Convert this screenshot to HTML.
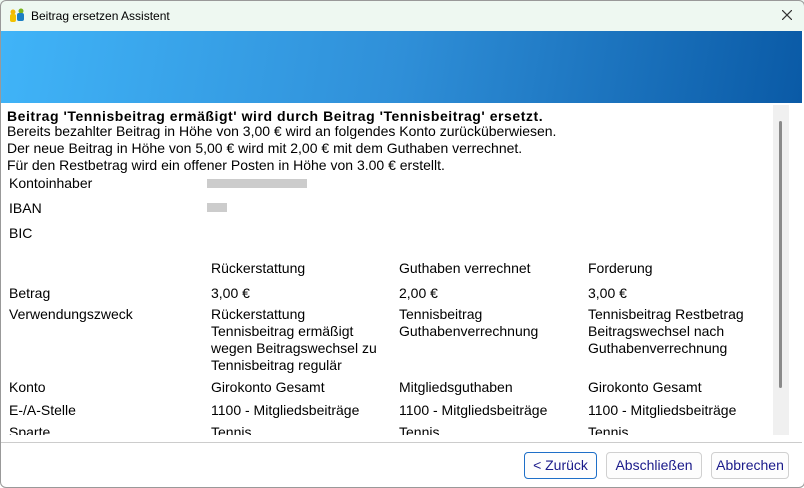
<!DOCTYPE html><html><head><style>
body{margin:0;width:804px;height:487px;overflow:hidden;font-family:"Liberation Sans",sans-serif;font-size:14px;color:#000;background:#fff;position:relative}
.a{position:absolute;white-space:nowrap;line-height:17px}
.tb{position:absolute;left:0;top:0;width:804px;height:31px;background:#eef8f1}
.bn{position:absolute;left:0;top:31px;width:802px;height:72px;background:linear-gradient(100deg,#40b4f8,#2f8fd8 50%,#0a5aa6)}
.btn{position:absolute;top:452px;height:25px;border:1px solid #d0d0d0;border-radius:4px;background:#fdfdfd;color:#1a1a8a;font-size:14px;line-height:25px;text-align:center}
.blur{position:absolute;background:#ccc;height:9px}
</style></head><body>
<div class="tb"></div>
<svg style="position:absolute;left:9px;top:8px" width="16" height="15"><circle cx="4" cy="4" r="2.5" fill="#f2b705"/><rect x="1" y="6" width="6" height="8" rx="2" fill="#f2c200"/><circle cx="12" cy="3" r="2.5" fill="#7ab51d"/><rect x="8" y="5" width="7" height="8" rx="2" fill="#1b7fc4"/></svg>
<div class="a" style="left:31px;top:8px;font-size:12px">Beitrag ersetzen Assistent</div>
<svg style="position:absolute;left:782px;top:10px" width="10" height="10"><path d="M0 0L10 10M10 0L0 10" stroke="#333" stroke-width="1.2"/></svg>
<div class="bn"></div>
<div style="position:absolute;left:0;top:0;width:803px;height:486px;border:1px solid #999;border-radius:6px;pointer-events:none"></div>
<div class="a" style="left:7px;top:108px;font-weight:bold;letter-spacing:0.55px">Beitrag 'Tennisbeitrag ermäßigt' wird durch Beitrag 'Tennisbeitrag' ersetzt.</div>
<div class="a" style="left:7px;top:123px">Bereits bezahlter Beitrag in Höhe von 3,00 € wird an folgendes Konto zurücküberwiesen.<br>Der neue Beitrag in Höhe von 5,00 € wird mit 2,00 € mit dem Guthaben verrechnet.<br>Für den Restbetrag wird ein offener Posten in Höhe von 3.00 € erstellt.</div>
<div class="a" style="left:9px;top:175px">Kontoinhaber</div>
<div class="blur" style="left:207px;top:179px;width:100px"></div>
<div class="a" style="left:9px;top:200px">IBAN</div>
<div class="blur" style="left:207px;top:203px;width:20px"></div>
<div class="a" style="left:9px;top:225px">BIC</div>
<div class="a" style="left:211px;top:260px">Rückerstattung</div><div class="a" style="left:399px;top:260px">Guthaben verrechnet</div><div class="a" style="left:588px;top:260px">Forderung</div>
<div class="a" style="left:9px;top:285px">Betrag</div><div class="a" style="left:211px;top:285px">3,00 €</div><div class="a" style="left:399px;top:285px">2,00 €</div><div class="a" style="left:588px;top:285px">3,00 €</div>
<div class="a" style="left:9px;top:306px">Verwendungszweck</div>
<div class="a" style="left:211px;top:306px">Rückerstattung<br>Tennisbeitrag ermäßigt<br>wegen Beitragswechsel zu<br>Tennisbeitrag regulär</div>
<div class="a" style="left:399px;top:306px">Tennisbeitrag<br>Guthabenverrechnung</div>
<div class="a" style="left:588px;top:306px">Tennisbeitrag Restbetrag<br>Beitragswechsel nach<br>Guthabenverrechnung</div>
<div class="a" style="left:9px;top:379px">Konto</div><div class="a" style="left:211px;top:379px">Girokonto Gesamt</div><div class="a" style="left:399px;top:379px">Mitgliedsguthaben</div><div class="a" style="left:588px;top:379px">Girokonto Gesamt</div>
<div class="a" style="left:9px;top:402px">E-/A-Stelle</div><div class="a" style="left:211px;top:402px">1100 - Mitgliedsbeiträge</div><div class="a" style="left:399px;top:402px">1100 - Mitgliedsbeiträge</div><div class="a" style="left:588px;top:402px">1100 - Mitgliedsbeiträge</div>
<div style="position:absolute;left:0;top:424px;width:790px;height:11px;overflow:hidden"><div class="a" style="left:9px;top:0">Sparte</div><div class="a" style="left:211px;top:0">Tennis</div><div class="a" style="left:399px;top:0">Tennis</div><div class="a" style="left:588px;top:0">Tennis</div></div>
<div style="position:absolute;left:773px;top:105px;width:16px;height:330px;background:#f0f0f0"></div>
<div style="position:absolute;left:779px;top:121px;width:3px;height:267px;background:#8a8a8a;border-radius:2px"></div>
<div style="position:absolute;left:1px;top:442px;width:801px;height:1px;background:#ccc"></div>
<div class="btn" style="left:524px;width:71px;border:1px solid #1e6fc8">&lt; Zurück</div>
<div class="btn" style="left:606px;width:94px">Abschließen</div>
<div class="btn" style="left:711px;width:76px">Abbrechen</div>
</body></html>
